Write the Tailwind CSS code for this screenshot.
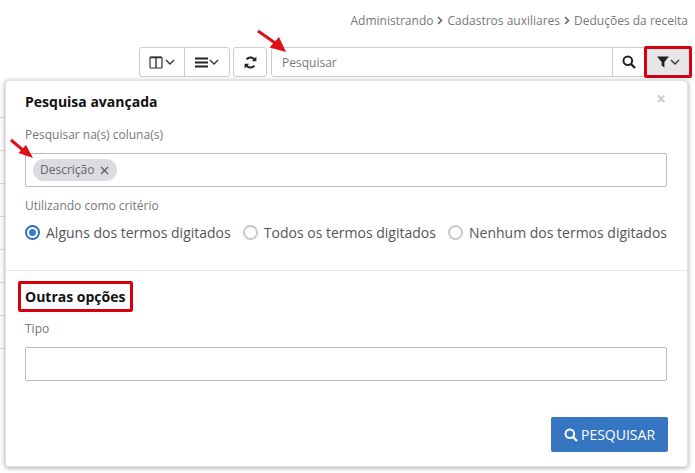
<!DOCTYPE html>
<html lang="en">
<head>
    <meta charset="UTF-8">
    <title>Deduções da receita</title>
    <script src="https://cdn.jsdelivr.net/npm/@tailwindcss/browser@4"></script>
</head>
<body class="relative w-[695px] h-[473px] overflow-hidden bg-white font-['Open_Sans',sans-serif] text-[#555]">
    <!-- Table rows behind the popover -->
    <div class="absolute left-0 top-[84px] w-[5px] flex flex-col">
        <div class="h-[34px] border-b border-[#ddd]"></div>
        <div class="h-[33px] border-b border-[#ddd]"></div>
        <div class="h-[33px] border-b border-[#ddd]"></div>
        <div class="h-[33px] border-b border-[#ddd]"></div>
        <div class="h-[33px] border-b border-[#ddd]"></div>
        <div class="h-[33px] border-b border-[#ddd]"></div>
        <div class="h-[33px] border-b border-[#ddd]"></div>
        <div class="h-[33px] border-b border-[#ddd]"></div>
    </div>

    <!-- Breadcrumb -->
    <div class="flex justify-end items-center gap-[3px] h-[17px] mt-[12px] pr-[7px] text-[12px] leading-[17px] text-[#777]">
        <span>Administrando</span>
        <svg width="8" height="9" viewBox="0 0 8 9" fill="none" stroke="#666" stroke-width="1.6"><path d="M2 1l3.5 3.5L2 8"/></svg>
        <span>Cadastros auxiliares</span>
        <svg width="8" height="9" viewBox="0 0 8 9" fill="none" stroke="#666" stroke-width="1.6"><path d="M2 1l3.5 3.5L2 8"/></svg>
        <span>Deduções da receita</span>
    </div>

    <!-- Toolbar -->
    <div class="flex mt-[18px] ml-[139px] h-[30px] w-[553px]">
        <div class="flex w-[91px] border border-[#ccc] rounded-[3px] mr-[3px]">
            <div class="w-[45px] border-r border-[#ccc] flex items-center justify-center gap-[2px]">
                <svg width="14" height="13" viewBox="0 0 14 13" fill="none" stroke="#333" stroke-width="1.2"><rect x="1" y="1" width="12" height="11" rx="1"/><path d="M7 1v11" stroke-width="1.4"/><path d="M1 1.5h12" stroke-width="1.6"/></svg>
                <svg width="10" height="6" viewBox="0 0 10 6" fill="none" stroke="#333" stroke-width="1.3"><path d="M1 1l4 4 4-4"/></svg>
            </div>
            <div class="flex-1 flex items-center justify-center gap-[1px]">
                <svg width="13" height="11" viewBox="0 0 13 11" fill="#222"><rect y="0.5" width="13" height="2"/><rect y="4.5" width="13" height="2"/><rect y="8.5" width="13" height="2"/></svg>
                <svg width="10" height="6" viewBox="0 0 10 6" fill="none" stroke="#333" stroke-width="1.3"><path d="M1 1l4 4 4-4"/></svg>
            </div>
        </div>
        <div class="w-[34px] border border-[#ccc] rounded-[3px] mr-[4px] flex items-center justify-center">
            <svg width="13" height="13" viewBox="0 0 13 13" fill="none" stroke="#222" stroke-width="1.9"><path d="M11 4.8A4.8 4.8 0 0 0 2.6 3.4"/><path d="M2 8.2a4.8 4.8 0 0 0 8.4 1.4"/><path d="M12.4 0.6v4.6H7.8z" fill="#222" stroke="none"/><path d="M0.6 12.4V7.8h4.6z" fill="#222" stroke="none"/></svg>
        </div>
        <div class="flex w-[374px] border border-[#ccc] rounded-l-[3px]">
            <div class="flex-1 border-r border-[#ccc] pl-[10px] text-[12px] leading-[29px] text-[#777]">Pesquisar</div>
            <div class="w-[31px] flex items-center justify-center">
                <svg width="14" height="14" viewBox="0 0 14 14" fill="none" stroke="#222" stroke-width="2"><circle cx="5.8" cy="5.8" r="4.3"/><path d="M9 9l4 4" stroke-width="2.4"/></svg>
            </div>
        </div>
        <div class="relative w-[48px] bg-[#e6e6e6] border-[3px] border-[#d6000f] rounded-[2px] -mt-[1px] -ml-[1px] h-[32px] flex items-center justify-center gap-[1px]">
            <svg width="12" height="12" viewBox="0 0 12 12" fill="#222"><path d="M0 0.5h12L7.4 6v5.5L4.6 9.6V6z"/></svg>
            <svg width="10" height="6" viewBox="0 0 10 6" fill="none" stroke="#333" stroke-width="1.3"><path d="M1 1l4 4 4-4"/></svg>
        </div>
    </div>

    <!-- Popover -->
    <div class="absolute left-[5px] top-[80px] w-[683px] h-[387px] bg-white border border-[#e2e2e2] rounded-[4px] shadow-[0_1px_5px_rgba(0,0,0,0.35)]">
        <span class="absolute right-[21px] top-[8px] text-[#ccc] text-[17px] leading-[20px] font-bold">×</span>

        <div class="pl-[19px] pr-[20px]">
            <h3 class="text-[14px] leading-[19px] font-bold text-[#111] mt-[11px]">Pesquisa avançada</h3>
            <p class="text-[12px] leading-[16px] text-[#777] mt-[16px]">Pesquisar na(s) coluna(s)</p>
            <div class="h-[34px] border border-[#bbb] rounded-[2px] mt-[10px] pl-[7px] pt-[5px]">
                <div class="flex w-[84px] items-center gap-[6px] h-[22px] pl-[7px] rounded-full bg-[#dcdce0] text-[12px] leading-[22px] text-[#666]">
                    <span>Descrição</span>
                    <svg width="9" height="9" viewBox="0 0 9 9" fill="none" stroke="#555" stroke-width="1.1"><path d="M1 1l7 7M8 1l-7 7"/></svg>
                </div>
            </div>
            <p class="text-[12px] leading-[16px] text-[#777] mt-[11px]">Utilizando como critério</p>
            <div class="flex justify-between items-center mt-[8px] h-[20px] text-[14px] text-[#555]">
                <label class="flex items-center gap-[6px]">
                    <span class="w-[15px] h-[15px] rounded-full border-2 border-[#2f6fb7] flex items-center justify-center"><span class="w-[7px] h-[7px] rounded-full bg-[#3a7bc8]"></span></span>
                    Alguns dos termos digitados
                </label>
                <label class="flex items-center gap-[6px]">
                    <span class="w-[15px] h-[15px] rounded-full border-2 border-[#c8c8c8]"></span>
                    Todos os termos digitados
                </label>
                <label class="flex items-center gap-[6px]">
                    <span class="w-[15px] h-[15px] rounded-full border-2 border-[#c8c8c8]"></span>
                    Nenhum dos termos digitados
                </label>
            </div>
        </div>

        <div class="border-t border-[#e8e8e8] mt-[28px]"></div>

        <div class="pl-[19px] pr-[20px]">
            <div class="w-[115px] h-[31px] -ml-[7px] mt-[10px] border-[3px] border-[#d6000f] rounded-[2px] pl-[4px] text-[14px] leading-[25px] font-bold text-[#111]">Outras opções</div>
            <p class="text-[12px] leading-[16px] text-[#777] mt-[9px]">Tipo</p>
            <div class="h-[34px] border border-[#bbb] rounded-[2px] mt-[10px]"></div>
            <div class="flex justify-end mt-[36px] -mr-[1px]">
                <button class="w-[117px] h-[35px] bg-[#3575c2] rounded-[2px] text-white text-[14px] flex items-center justify-center gap-[3px]">
                    <svg width="14" height="14" viewBox="0 0 14 14" fill="none" stroke="#fff" stroke-width="2"><circle cx="5.8" cy="5.8" r="4.3"/><path d="M9 9l4 4" stroke-width="2.4"/></svg>
                    PESQUISAR
                </button>
            </div>
        </div>
    </div>

    <!-- Red annotation arrows -->
    <svg class="absolute left-[255px] top-[28px]" width="36" height="28" viewBox="0 0 36 28"><path d="M3 3l20 14" stroke="#e0101a" stroke-width="3"/><path d="M31 24L14.5 19.5 24 9z" fill="#e0101a"/></svg>
    <svg class="absolute left-[8px] top-[137px]" width="28" height="24" viewBox="0 0 28 24"><path d="M3 3l13 11" stroke="#e0101a" stroke-width="3"/><path d="M25 21L10.5 16 18 8z" fill="#e0101a"/></svg>
</body>
</html>
